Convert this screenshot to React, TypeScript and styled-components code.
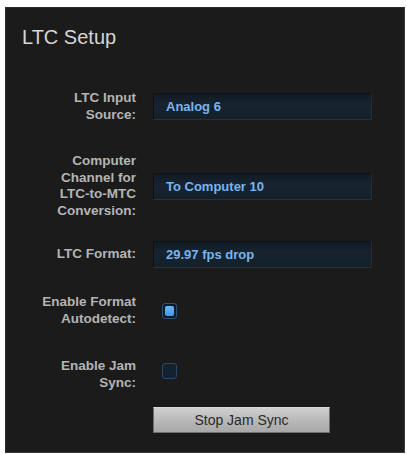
import React from 'react'
import styled, { createGlobalStyle } from 'styled-components'

const GlobalStyle = createGlobalStyle`
  html, body {
    margin: 0;
    padding: 0;
    background: #ffffff;
  }
  body {
    font-family: 'Liberation Sans', Arial, sans-serif;
  }
`

const Page = styled.div`
  width: 407px;
  height: 454px;
  padding: 7px 2px 1px 5px;
  box-sizing: border-box;
  background: #ffffff;
`

const Panel = styled.div`
  height: 100%;
  box-sizing: border-box;
  background: #1b1b1b;
  border: 1px solid #3c3c3c;
  border-top-color: #2a2a2a;
  border-left-color: #2a2a2a;
  padding-top: 17px;
  display: flex;
  flex-direction: column;
`

const Title = styled.h1`
  margin: 0 0 0 16px;
  font-size: 20px;
  line-height: 24px;
  font-weight: normal;
  color: #d6d6d6;
`

const Row = styled.div<{ $mt: number }>`
  display: grid;
  grid-template-columns: 130px 219px;
  column-gap: 17px;
  align-items: center;
  margin-top: ${(p) => p.$mt}px;
`

const Label = styled.div`
  text-align: right;
  font-size: 13.5px;
  line-height: 16.5px;
  font-weight: bold;
  color: #b4b4b4;
`

const Field = styled.div`
  height: 27px;
  box-sizing: border-box;
  display: flex;
  align-items: center;
  padding-left: 12px;
  background: linear-gradient(#111a24, #17232f 40%, #142029);
  border: 1px solid #0c1218;
  border-bottom-color: #243241;
  border-right-color: #1f2c39;
  font-size: 13px;
  font-weight: bold;
  color: #78b5ee;
`

const Check = styled.div<{ $on?: boolean; $lift?: number }>`
  width: 15px;
  height: 16px;
  margin-left: 9px;
  margin-bottom: ${(p) => p.$lift ?? 0}px;
  box-sizing: border-box;
  border-radius: 3px;
  border: 1px solid ${(p) => (p.$on ? '#2c4f72' : '#2a4866')};
  background: ${(p) => (p.$on ? '#0f1d2a' : '#132231')};
  display: flex;
  align-items: center;
  justify-content: center;
  &::after {
    content: '';
    display: ${(p) => (p.$on ? 'block' : 'none')};
    width: 9px;
    height: 10px;
    border-radius: 2px;
    background: linear-gradient(#6ab8ff, #3f96f0);
  }
`

const Button = styled.button`
  grid-column: 2;
  width: 177px;
  height: 26px;
  padding: 0;
  border: 1px solid #6e6e6e;
  border-top-color: #dadada;
  background: linear-gradient(#d0d0d0, #b9b9b9 50%, #a8a8a8);
  font-family: 'Liberation Sans', Arial, sans-serif;
  font-size: 14px;
  color: #2a2a2a;
`

export default function App() {
  return (
    <Page>
      <GlobalStyle />
      <Panel>
        <Title>LTC Setup</Title>
        <Row $mt={41}>
          <Label>
            LTC Input
            <br />
            Source:
          </Label>
          <Field>Analog 6</Field>
        </Row>
        <Row $mt={30}>
          <Label>
            Computer
            <br />
            Channel for
            <br />
            LTC-to-MTC
            <br />
            Conversion:
          </Label>
          <Field>To Computer 10</Field>
        </Row>
        <Row $mt={22}>
          <Label>LTC Format:</Label>
          <Field>29.97 fps drop</Field>
        </Row>
        <Row $mt={26}>
          <Label>
            Enable Format
            <br />
            Autodetect:
          </Label>
          <Check $on />
        </Row>
        <Row $mt={31}>
          <Label>
            Enable Jam
            <br />
            Sync:
          </Label>
          <Check $lift={8} />
        </Row>
        <Row $mt={16}>
          <Button>Stop Jam Sync</Button>
        </Row>
      </Panel>
    </Page>
  )
}
